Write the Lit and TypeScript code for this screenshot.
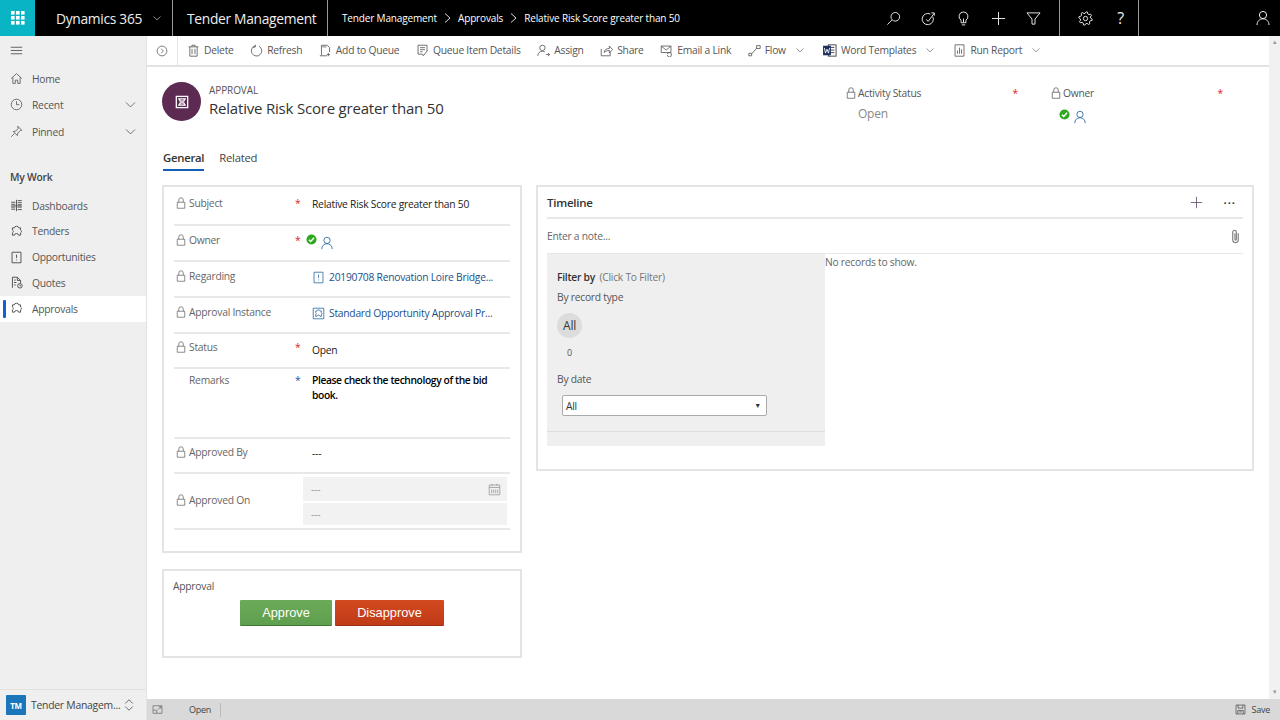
import { LitElement, html, css, svg } from 'lit';
import { customElement } from 'lit/decorators.js';

const gearPath = () => {
  // toothed outline for the settings icon
  const pts: string[] = [];
  for (let i = 0; i < 32; i++) {
    const a = (i / 32) * Math.PI * 2;
    const r = i % 4 < 2 ? 7.2 : 5.4;
    pts.push(`${(8 + r * Math.cos(a + 0.1)).toFixed(2)} ${(8 + r * Math.sin(a + 0.1)).toFixed(2)}`);
  }
  return `M${pts.join('L')}Z`;
};

const P: Record<string, string> = {
  chevron: 'M2.5 5.5L8 11l5.5-5.5',
  search: 'M6.3 9.7L1.5 14.5M14.5 6.2a4.6 4.6 0 1 1-9.2 0a4.6 4.6 0 1 1 9.2 0z',
  task: 'M12.6 6a6 6 0 1 1-2.6-2.7M5.5 9l2.2 2L14 2.5M11 2h3.2v3',
  bulb: 'M8 1a4.8 4.8 0 0 0-2.6 8.8V12.5h5.2V9.8A4.8 4.8 0 0 0 8 1zM6.2 14.8h3.6M8 8v4.5',
  plus: 'M8 1v14M1 8h14',
  funnel: 'M1 2h14L9.6 8.6V14H6.4V8.6z',
  user: 'M11.6 5a3.6 3.6 0 1 1-7.2 0a3.6 3.6 0 1 1 7.2 0zM2 15c0-3.6 2.5-6.2 6-6.2s6 2.6 6 6.2',
  menu: 'M1 4h14M1 8h14M1 12h14',
  home: 'M1.5 8L8 2l6.5 6M3.5 6.5V14h3v-4h3v4h3V6.5',
  clock: 'M14.5 8a6.5 6.5 0 1 1-13 0a6.5 6.5 0 1 1 13 0zM8 4v4.2h3.5',
  pin: 'M9.5 1.5l5 5-2 .5-3 3-.5 3-5-5 3-.5 3-3zM5.5 10.5L1.5 14.5',
  dash: 'M1.5 4h5M1.5 6.500h5M9.5 2h5M9.5 4.500h5M9.5 7h5M1.5 10h5M1.5 12.500h5M9.5 10h5M9.5 13h5M8 1v14M1.500 8.500h13',
  puzzle: 'M5.5 3.5a2.5 2 0 0 1 5 0h2.5v2.7a2 2 0 0 1 0 3.6v2.7h-2.5a2.5 2 0 0 0-5 0H3V9.8a2 2 0 0 0 0-3.6V3.5z',
  opp: 'M2.5 1.5h11v13h-11zM8 4.5v4M8 10.5v1',
  quote: 'M3 14.5V1.5h6l4 4v3M9 1.5v4h4M5 5h2M5 8h3M5 11h2M15 12a2.8 2.8 0 1 1-5.6 0a2.8 2.8 0 1 1 5.6 0zM12.2 10.6V12h1.2',
  circleNext: 'M14.5 8a6.5 6.5 0 1 1-13 0a6.5 6.5 0 1 1 13 0zM6.8 5l3 3-3 3',
  trash: 'M2 3.5h12M6 3.5V1.5h4v2M3.5 3.5v11.5h9V3.5M6.2 6v6.5M9.8 6v6.5',
  refresh: 'M6.5 2.2A6.4 6.4 0 1 0 11 2.7M6.5 .8v3H3.5',
  queue: 'M3 14V1.5h7l3 3V10M4 3.5h5M1 14.5h9M11.5 11v4M9.5 13h4',
  details: 'M2.5 12.5V1.5h11v7M5 4.5h6M5 7h6M5 9.5h3M2.5 12.5H8l1 2 5-6.5',
  assign: 'M10 4.8a3.3 3.3 0 1 1-6.6 0a3.3 3.3 0 1 1 6.6 0zM1 14.5c0-3.4 2.4-5.5 5.7-5.5c1.2 0 2.2.3 3 .8M11 13h4.5M13.5 11l2 2-2 2',
  share: 'M1.5 6v8.5h11V10M5 10.5c.5-3.5 3-5 6.5-5V2.5l4 4.3-4 4.2V8c-2.7 0-4.8.6-6.5 2.5z',
  mail: 'M1.5 2.5h12v8h-12zM1.5 2.5l6 5 6-5M9 13.5a2.5 2.5 0 0 0 5 0a2.5 2.5 0 0 0-5-1',
  flow: 'M1 11.5h3.5v3H1zM4.5 12L11 5M10.5 2h4.5v3.5h-4.5z',
  report: 'M2.5 1h11v14h-11zM5.5 12V8M8 12V4.5M10.5 12V6.5',
  lock: 'M3 7h10v8H3zM5 7V4a3 3 0 0 1 6 0v3',
  cal: 'M1.5 2.5h13v12h-13zM1.5 5.5h13M5 1v2.5M11 1v2.5M4.5 8v4.5M7 8v4.5M9.5 8v4.5M12 8v4.5',
  instance: 'M1.5 1.5h13v13h-13zM6 5a2 1.5 0 0 1 4 0h1.5v2a1.5 1.5 0 0 1 0 2.5V11.5H10a2 1.5 0 0 0-4 0H4.500V9.500a1.500 1.500 0 0 0 0-2.500V5z',
  clip: 'M11 4.500V11.500a3 3 0 0 1-6 0V3.500a2 2 0 0 1 4 0V11a.8.8 0 0 1-1.600 0V4.500',
  sort: 'M3 6l5-5 5 5M3 10l5 5 5-5',
  popout: 'M1.500 2.500h13v11h-13zM7 13.500V9H1.500M9 8l4-4M10 4h3v3',
  save: 'M1.500 1.500h13v13h-13zM4.500 1.500v4.500h7v-4.500M4 14.500V9.500h8v5M6 11.500h4',
  approvalMark: 'M1.500 1.500h13v13h-13zM4.500 4.500h7l-1.500 2.500h-4zM4.500 11.500h7l-1.500-2.500h-4z',
};

const icon = (name: string, size = 14, sw = 1) => svg`
  <svg class="icon" width=${size} height=${size} viewBox="0 0 16 16" fill="none"
       stroke="currentColor" stroke-width=${sw}>
    <path d=${name === 'gear' ? gearPath() : P[name]}></path>
    ${name === 'gear' ? svg`<circle cx="8" cy="8" r="2.300"></circle>` : ''}
  </svg>`;

const waffle = html`<svg width="14" height="14" viewBox="0 0 14 14" fill="#fff">
  ${[0, 5, 10].map(y => [0, 5, 10].map(x => svg`<rect x=${x} y=${y} width="3.600" height="3.600"></rect>`))}
</svg>`;

const check = html`<svg width="11" height="11" viewBox="0 0 12 12">
  <circle cx="6" cy="6" r="5.500" fill="#2ea81f"></circle>
  <path d="M3.200 6.200l2 2 3.600-4" fill="none" stroke="#fff" stroke-width="1.600"></path>
</svg>`;

const wordIcon = html`<svg width="14" height="13" viewBox="0 0 16 15">
  <rect x="6" y="1" width="9" height="13" fill="#fff" stroke="#333"></rect>
  <path d="M8 4h5M8 7h5M8 10h5" stroke="#333"></path>
  <rect x="0" y="2" width="9" height="11" fill="#1c2f5c"></rect>
  <path d="M1.500 4.500l1.300 6 1.700-4.500 1.700 4.500 1.300-6" fill="none" stroke="#fff" stroke-width="1"></path>
</svg>`;

@customElement('app-root')
export class AppRoot extends LitElement {
  static styles = css`
    :host {
      display: block;
      width: 1280px;
      height: 720px;
      overflow: hidden;
      font-family: "Open Sans", "Liberation Sans", sans-serif;
      font-size: 10.3px;
      letter-spacing: -0.25px;
      color: #444;
      background: #fff;
    }
    .icon { flex: none; display: block; }

    /* top bar */
    .top { display: flex; align-items: center; height: 36px; background: #000; color: #eee; }
    .waffle { width: 35px; height: 36px; background: #09b5c4; display: flex; align-items: center; justify-content: center; }
    .product { width: 138px; height: 36px; display: flex; align-items: center; padding-left: 21px; box-sizing: border-box; font-size: 13.8px; letter-spacing: -0.3px; border-right: 1px solid #999; white-space: nowrap; }
    .product .icon { margin-left: 10px; }
    .app { width: 155px; height: 36px; display: flex; align-items: center; padding-left: 14px; box-sizing: border-box; font-size: 13.8px; letter-spacing: -0.3px; border-right: 1px solid #999; white-space: nowrap; }
    .crumbs { display: flex; align-items: center; gap: 7px; padding-left: 14px; font-size: 10px; font-weight: 500; letter-spacing: -0.15px; color: #fff; flex: 1; white-space: nowrap; }
    .tools { display: flex; align-items: center; height: 36px; }
    .tool { width: 35px; display: flex; justify-content: center; font-size: 16px; }
    .tools.first { padding-right: 8.5px; }
    .tools.mid { border-left: 1px solid #999; border-right: 1px solid #999; padding: 0 0 0 8.5px; width: 80px; box-sizing: border-box; height: 36px; }
    .me { width: 141px; display: flex; justify-content: flex-end; padding-right: 9px; box-sizing: border-box; }

    .body { display: flex; height: 684px; }

    /* sidebar */
    .side { width: 147px; flex: none; background: #efefef; display: flex; flex-direction: column; border-right: 1px solid #e2e2e2; box-sizing: border-box; }
    .burger { height: 30px; padding: 8px 0 0 10px; box-sizing: border-box; color: #444; }
    .nav { display: flex; align-items: center; height: 25.75px; padding-left: 10px; gap: 9px; color: #555; position: relative; }
    .nav .grow { flex: 1; }
    .nav .arrow { margin-right: 9px; }
    .nav.active { background: #fff; }
    .nav.active::before { content: ""; position: absolute; left: 3px; top: 4px; bottom: 4px; width: 3px; background: #1160d8; border-radius: 1px; }
    .pinned { margin-top: 1.5px; }
    .group { padding: 24px 0 0 10px; font-weight: 600; color: #444; line-height: 16px; margin-bottom: 8px; }
    .spacer { flex: 1; }
    .switch { display: flex; align-items: center; height: 30px; border-top: 1px solid #e2e2e2; padding-left: 6px; color: #444; font-size: 10.4px; font-weight: 500; white-space: nowrap; }
    .badge { width: 20px; height: 20px; background: #1b75bb; color: #fff; display: flex; align-items: center; justify-content: center; font-size: 8px; font-weight: 700; margin-right: 5px; border-radius: 1px; }
    .switch .icon { margin-left: 3px; }

    /* main */
    .main { flex: 1; display: flex; flex-direction: column; min-width: 0; }
    .work { flex: 1; display: flex; min-height: 0; }
    .page { flex: 1; min-width: 0; }
    .scroll { width: 11px; flex: none; background: #f1f1f1; display: flex; flex-direction: column; justify-content: space-between; align-items: center; color: #999; font-size: 6px; padding: 2px 0 3px; box-sizing: border-box; }
    .scroll span { height: 8px; line-height: 8px; }

    .cmd { display: flex; align-items: center; height: 29px; border-bottom: 2px solid #e2e2e2; background: #fff; color: #555; }
    .cmd .back { width: 31px; height: 29px; border-right: 1px solid #e4e4e4; display: flex; align-items: center; justify-content: center; box-sizing: border-box; margin-right: 9px; }
    .cmd-item { display: flex; align-items: center; gap: 4px; margin-right: 16.6px; white-space: nowrap; position: relative; top: -0.5px; }
    .cmd-item .more { margin: 0 1.5px 0 5px; }

    .head { display: flex; height: 75px; }
    .avatar { width: 39px; height: 39px; border-radius: 50%; background: #5c2a52; color: #fff; display: flex; align-items: center; justify-content: center; margin: 15px 8px 0 15px; flex: none; }
    .titles { padding-top: 16px; flex: 1; }
    .entity { font-size: 10px; line-height: 14px; color: #555; letter-spacing: -0.1px; }
    .title { font-size: 15px; line-height: 22px; color: #333; letter-spacing: -0.2px; white-space: nowrap; }
    .hfield { width: 205px; padding-top: 19px; }
    .hfield.owner { width: 219px; }
    .hlabel { display: flex; align-items: center; gap: 1px; line-height: 14px; color: #555; width: 173px; }
    .hlabel .star { margin-left: auto; color: #d22; }
    .hval { font-size: 12px; color: #888; line-height: 20px; padding: 4px 0 0 13px; }
    .huser { display: flex; align-items: flex-start; gap: 3px; padding: 9px 0 0 9px; color: #2b6ca3; }
    .huser .icon { margin-top: 1px; }

    .tabs { display: flex; gap: 15px; padding-left: 16px; height: 43px; align-items: flex-start; font-size: 11.3px; }
    .tab { line-height: 17px; padding: 7px 0 3px; color: #444; }
    .tab.on { font-weight: 600; color: #333; border-bottom: 2px solid #1160b7; }

    .cols { display: flex; gap: 14px; padding-left: 15px; padding-right: 15px; }
    .left { width: 360px; flex: none; display: flex; flex-direction: column; gap: 16px; }
    .card { border: 2px solid #e4e4e4; box-sizing: border-box; }
    .form { height: 368px; padding: 0 10px; }
    .row { display: grid; grid-template-columns: 120px 17px 1fr; border-bottom: 2px solid #e8e8e8; box-sizing: border-box; padding-left: 1px; }
    .cell-label { display: flex; align-items: center; gap: 2px; height: 14px; color: #666; white-space: nowrap; }
    .cell-label.plain { padding-left: 14px; }
    .cell-label.raised { margin-top: -2px; }
    .star { color: #d22; }
    .star.blue { color: #2a4fb0; }
    .value { color: #222; font-weight: 500; white-space: nowrap; }
    .value.strong { color: #000; font-weight: 600; letter-spacing: -0.4px; line-height: 15px; white-space: normal; }
    .link { display: flex; align-items: center; gap: 4px; color: #1b4f8a; font-weight: 500; white-space: nowrap; }
    .link .icon { color: #2b6ca3; }
    .owner-val { display: flex; align-items: flex-start; gap: 3px; color: #2b6ca3; margin-left: -6px; }
    .owner-val .icon { margin-top: 2px; }
    .lockedinputs { display: flex; flex-direction: column; gap: 2px; margin-left: -9px; margin-right: 3px; }
    .locked { height: 24px; background: #f2f2f2; color: #999; display: flex; align-items: center; justify-content: space-between; padding: 0 6px 0 8px; }
    .locked + .locked { height: 22px; }

    .approval { height: 89px; padding: 8px 9px 0; }
    .approval-label { line-height: 14px; color: #555; }
    .btns { display: flex; justify-content: flex-start; gap: 3px; margin: 7px 0 0 67px; }
    .btn { height: 26px; box-sizing: border-box; display: flex; align-items: center; justify-content: center; color: #fff; font-family: "Liberation Sans", sans-serif; font-size: 12.8px; letter-spacing: 0; border-radius: 1px; }
    .btn.ok { width: 92px; background: linear-gradient(#6bab58, #5f9e4e); border-bottom: 1px solid #3f7a33; }
    .btn.no { width: 109px; background: linear-gradient(#d34a20, #bf3a17); border-bottom: 1px solid #9c2e12; }

    .timeline { flex: 1; height: 286px; padding: 0 9px; display: flex; flex-direction: column; }
    .tl-head { display: flex; align-items: center; height: 30px; border-bottom: 2px solid #e8e8e8; color: #333; font-size: 11.5px; font-weight: 600; }
    .tl-head .grow { flex: 1; }
    .tl-head .plus { color: #5c4a6a; margin-right: 21px; }
    .tl-head .dots { font-weight: 700; font-size: 11px; margin-right: 7px; letter-spacing: 1px; }
    .note { display: flex; align-items: center; justify-content: space-between; height: 34px; border-bottom: 1px solid #e8e8e8; color: #666; }
    .note .icon { color: #888; }
    .tl-body { display: flex; }
    .filter { width: 278px; height: 192px; background: #efefef; flex: none; box-sizing: border-box; padding: 16px 10px 0; position: relative; display: flex; flex-direction: column; }
    .f-title { line-height: 14px; color: #777; }
    .f-title b { color: #333; font-weight: 600; margin-right: 2px; }
    .f-sub { line-height: 14px; margin-top: 6px; color: #555; }
    .all { width: 25px; height: 25px; border-radius: 50%; background: #dcdcdc; display: flex; align-items: center; justify-content: center; font-size: 12px; color: #333; margin-top: 9px; }
    .count { width: 25px; text-align: center; font-size: 9px; line-height: 12px; margin-top: 9px; color: #555; }
    .f-date { margin-top: 13px; }
    .select { width: 205px; height: 21px; box-sizing: border-box; margin: 9px 0 0 5px; background: #fff; border: 1px solid #aaa; border-radius: 2px; display: flex; align-items: center; justify-content: space-between; padding: 0 5px 0 3px; color: #333; }
    .select i { font-style: normal; font-size: 7px; }
    .f-rule { position: absolute; left: 0; right: 0; bottom: 14px; border-top: 1px solid #ddd; }
    .empty { line-height: 14px; padding-top: 1px; color: #666; }

    .status { height: 21px; background: #d9d9d9; display: flex; align-items: center; color: #444; flex: none; }
    .status .pop { margin: 0 26px 0 5px; color: #666; }
    .status .state { padding-right: 9px; border-right: 1px solid #bbb; line-height: 14px; font-size: 9px; }
    .status .grow { flex: 1; }
    .status .save { display: flex; align-items: center; gap: 6px; margin-right: 10px; font-size: 9px; }
  `;

  private nav = [
    ['dash', 'Dashboards'], ['puzzle', 'Tenders'], ['opp', 'Opportunities'], ['quote', 'Quotes'],
  ];

  private cmds = [
    ['trash', 'Delete', false], ['refresh', 'Refresh', false], ['queue', 'Add to Queue', false],
    ['details', 'Queue Item Details', false], ['assign', 'Assign', false], ['share', 'Share', false],
    ['mail', 'Email a Link', false], ['flow', 'Flow', true], ['word', 'Word Templates', true],
    ['report', 'Run Report', true],
  ] as [string, string, boolean][];

  private lock() { return icon('lock', 12); }

  private row(label: string, star: string, value: unknown, height: number, top: number, valueTop = 0, locked = true) {
    return html`<div class="row" style="height:${height}px;padding-top:${top}px">
      <div class="cell-label ${locked ? '' : 'plain'}">${locked ? this.lock() : ''}${label}</div>
      <div class="star ${star === 'blue' ? 'blue' : ''}">${star ? '*' : ''}</div>
      <div style="padding-top:${valueTop}px">${value}</div>
    </div>`;
  }

  render() {
    return html`
      <div class="top">
        <div class="waffle">${waffle}</div>
        <div class="product">Dynamics 365 ${icon('chevron', 10)}</div>
        <div class="app">Tender Management</div>
        <div class="crumbs">
          <span>Tender Management</span>${this.crumbArrow()}<span>Approvals</span>${this.crumbArrow()}<span>Relative Risk Score greater than 50</span>
        </div>
        <div class="tools first">
          ${['search', 'task', 'bulb', 'plus', 'funnel'].map(n => html`<div class="tool">${icon(n, 15)}</div>`)}
        </div>
        <div class="tools mid">
          <div class="tool">${icon('gear', 15)}</div>
          <div class="tool">?</div>
        </div>
        <div class="me">${icon('user', 16)}</div>
      </div>
      <div class="body">
        <div class="side">
          <div class="burger">${icon('menu', 13)}</div>
          <div class="nav">${icon('home', 13)}<span>Home</span></div>
          <div class="nav">${icon('clock', 13)}<span class="grow">Recent</span><span class="arrow">${icon('chevron', 13)}</span></div>
          <div class="nav pinned">${icon('pin', 13)}<span class="grow">Pinned</span><span class="arrow">${icon('chevron', 13)}</span></div>
          <div class="group">My Work</div>
          ${this.nav.map(([i, t]) => html`<div class="nav">${icon(i, 13, 1.2)}<span>${t}</span></div>`)}
          <div class="nav active">${icon('puzzle', 13, 1.2)}<span>Approvals</span></div>
          <div class="spacer"></div>
          <div class="switch"><span class="badge">TM</span>Tender Managem...${icon('sort', 12)}</div>
        </div>
        <div class="main">
          <div class="work">
            <div class="page">
              <div class="cmd">
                <div class="back">${icon('circleNext', 12)}</div>
                ${this.cmds.map(([i, t, more]) => html`<div class="cmd-item">
                  ${i === 'word' ? wordIcon : icon(i, 13)}<span>${t}</span>
                  ${more ? html`<span class="more">${icon('chevron', 10)}</span>` : ''}
                </div>`)}
              </div>
              <div class="head">
                <div class="avatar">${icon('approvalMark', 14, 1.5)}</div>
                <div class="titles">
                  <div class="entity">APPROVAL</div>
                  <div class="title">Relative Risk Score greater than 50</div>
                </div>
                <div class="hfield">
                  <div class="hlabel">${this.lock()}Activity Status<span class="star">*</span></div>
                  <div class="hval">Open</div>
                </div>
                <div class="hfield owner">
                  <div class="hlabel">${this.lock()}Owner<span class="star">*</span></div>
                  <div class="huser">${check}${icon('user', 14)}</div>
                </div>
              </div>
              <div class="tabs">
                <div class="tab on">General</div>
                <div class="tab">Related</div>
              </div>
              <div class="cols">
                <div class="left">
                  <div class="card form">
                    ${this.row('Subject', 'red', html`<div class="value">Relative Risk Score greater than 50</div>`, 39, 9, 1)}
                    ${this.row('Owner', 'red', html`<div class="owner-val">${check}${icon('user', 14)}</div>`, 36, 7, 1)}
                    ${this.row('Regarding', '', html`<div class="link">${icon('opp', 13)}20190708 Renovation Loire Bridge...</div>`, 36, 7, 1)}
                    ${this.row('Approval Instance', '', html`<div class="link">${icon('instance', 13)}Standard Opportunity Approval Pr...</div>`, 36, 7, 1)}
                    ${this.row('Status', 'red', html`<div class="value">Open</div>`, 35, 6, 3)}
                    ${this.row('Remarks', 'blue', html`<div class="value strong">Please check the technology of the bid book.</div>`, 70, 4, 0, false)}
                    ${this.row('Approved By', '', html`<div class="value">---</div>`, 35, 6, 1)}
                    <div class="row" style="height:56px;align-items:center">
                      <div class="cell-label raised">${this.lock()}Approved On</div><div></div>
                      <div class="lockedinputs">
                        <div class="locked">---${icon('cal', 13)}</div>
                        <div class="locked">---</div>
                      </div>
                    </div>
                  </div>
                  <div class="card approval">
                    <div class="approval-label">Approval</div>
                    <div class="btns">
                      <div class="btn ok">Approve</div>
                      <div class="btn no">Disapprove</div>
                    </div>
                  </div>
                </div>
                <div class="card timeline">
                  <div class="tl-head">
                    <span class="grow">Timeline</span>
                    <span class="plus">${icon('plus', 13)}</span>
                    <span class="dots">···</span>
                  </div>
                  <div class="note"><span>Enter a note...</span>${icon('clip', 15, 1.3)}</div>
                  <div class="tl-body">
                    <div class="filter">
                      <div class="f-title"><b>Filter by</b> (Click To Filter)</div>
                      <div class="f-sub">By record type</div>
                      <div class="all">All</div>
                      <div class="count">0</div>
                      <div class="f-sub f-date">By date</div>
                      <div class="select">All<i>▼</i></div>
                      <div class="f-rule"></div>
                    </div>
                    <div class="empty">No records to show.</div>
                  </div>
                </div>
              </div>
            </div>
            <div class="scroll"><span>▲</span><span>▼</span></div>
          </div>
          <div class="status">
            <span class="pop">${icon('popout', 11)}</span>
            <span class="state">Open</span>
            <span class="grow"></span>
            <span class="save">${icon('save', 11)}Save</span>
          </div>
        </div>
      </div>
    `;
  }

  private crumbArrow() {
    return html`<svg width="7" height="10" viewBox="0 0 7 10" fill="none" stroke="#ddd"><path d="M1 .5L6 5 1 9.500"></path></svg>`;
  }
}
